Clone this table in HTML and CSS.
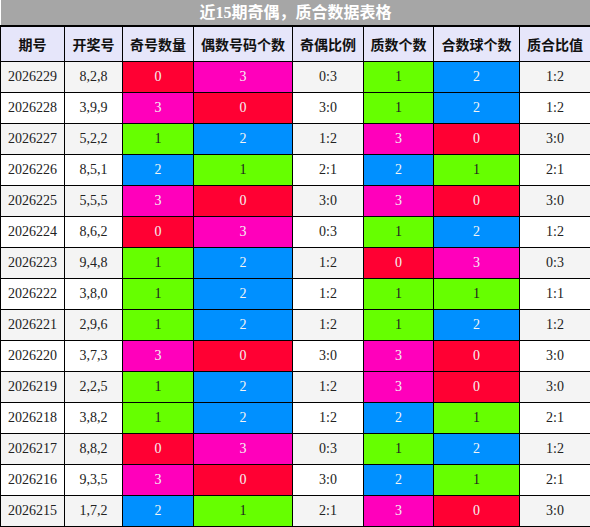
FILE: index.html
```html
<!DOCTYPE html>
<html lang="zh">
<head>
<meta charset="utf-8">
<link rel="stylesheet" href="styles.css">
</head>
<body>
<table class="tbl">
  <colgroup>
    <col class="c1"><col class="c2"><col class="c3"><col class="c4"><col class="c5"><col class="c6"><col class="c7"><col class="c8">
  </colgroup>
  <thead>
    <tr class="title"><th colspan="8">近15期奇偶，质合数据表格</th></tr>
    <tr class="head"><th>期号</th><th>开奖号</th><th>奇号数量</th><th>偶数号码个数</th><th>奇偶比例</th><th>质数个数</th><th>合数球个数</th><th>质合比值</th></tr>
  </thead>
  <tbody>
    <tr><td>2026229</td><td>8,2,8</td><td class="red">0</td><td class="mag">3</td><td>0:3</td><td class="grn">1</td><td class="blu">2</td><td>1:2</td></tr>
    <tr><td>2026228</td><td>3,9,9</td><td class="mag">3</td><td class="red">0</td><td>3:0</td><td class="grn">1</td><td class="blu">2</td><td>1:2</td></tr>
    <tr><td>2026227</td><td>5,2,2</td><td class="grn">1</td><td class="blu">2</td><td>1:2</td><td class="mag">3</td><td class="red">0</td><td>3:0</td></tr>
    <tr><td>2026226</td><td>8,5,1</td><td class="blu">2</td><td class="grn">1</td><td>2:1</td><td class="blu">2</td><td class="grn">1</td><td>2:1</td></tr>
    <tr><td>2026225</td><td>5,5,5</td><td class="mag">3</td><td class="red">0</td><td>3:0</td><td class="mag">3</td><td class="red">0</td><td>3:0</td></tr>
    <tr><td>2026224</td><td>8,6,2</td><td class="red">0</td><td class="mag">3</td><td>0:3</td><td class="grn">1</td><td class="blu">2</td><td>1:2</td></tr>
    <tr><td>2026223</td><td>9,4,8</td><td class="grn">1</td><td class="blu">2</td><td>1:2</td><td class="red">0</td><td class="mag">3</td><td>0:3</td></tr>
    <tr><td>2026222</td><td>3,8,0</td><td class="grn">1</td><td class="blu">2</td><td>1:2</td><td class="grn">1</td><td class="grn">1</td><td>1:1</td></tr>
    <tr><td>2026221</td><td>2,9,6</td><td class="grn">1</td><td class="blu">2</td><td>1:2</td><td class="grn">1</td><td class="blu">2</td><td>1:2</td></tr>
    <tr><td>2026220</td><td>3,7,3</td><td class="mag">3</td><td class="red">0</td><td>3:0</td><td class="mag">3</td><td class="red">0</td><td>3:0</td></tr>
    <tr><td>2026219</td><td>2,2,5</td><td class="grn">1</td><td class="blu">2</td><td>1:2</td><td class="mag">3</td><td class="red">0</td><td>3:0</td></tr>
    <tr><td>2026218</td><td>3,8,2</td><td class="grn">1</td><td class="blu">2</td><td>1:2</td><td class="blu">2</td><td class="grn">1</td><td>2:1</td></tr>
    <tr><td>2026217</td><td>8,8,2</td><td class="red">0</td><td class="mag">3</td><td>0:3</td><td class="grn">1</td><td class="blu">2</td><td>1:2</td></tr>
    <tr><td>2026216</td><td>9,3,5</td><td class="mag">3</td><td class="red">0</td><td>3:0</td><td class="blu">2</td><td class="grn">1</td><td>2:1</td></tr>
    <tr><td>2026215</td><td>1,7,2</td><td class="blu">2</td><td class="grn">1</td><td>2:1</td><td class="mag">3</td><td class="red">0</td><td>3:0</td></tr>
  </tbody>
</table>
</body>
</html>
```
FILE: styles.css
```css
html, body {
  margin: 0;
  padding: 0;
  background: #ffffff;
}
.tbl {
  border-collapse: collapse;
  table-layout: fixed;
  width: 590px;
  font-family: "Liberation Serif", "Noto Sans CJK SC", serif;
  font-size: 14px;
  color: #222;
}
.c1 { width: 64px; }
.c2 { width: 58px; }
.c3 { width: 71px; }
.c4 { width: 99px; }
.c5 { width: 71px; }
.c6 { width: 70px; }
.c7 { width: 86px; }
.c8 { width: 71px; }
.tbl th, .tbl td {
  border: 1px solid #000;
  text-align: center;
  padding: 0;
  overflow: hidden;
  white-space: nowrap;
}
.title th {
  height: 25px;
  background: #a6a6a6;
  color: #fff;
  font-size: 16px;
  font-weight: bold;
  border-width: 0 0 2px 0;
  line-height: 25px;
}
.head th {
  height: 34px;
  background: #e6e6fa;
  font-family: "Noto Sans CJK SC", sans-serif;
  font-weight: bold;
  font-size: 14px;
  color: #111;
}
.tbl td {
  height: 30px;
}
.tbl tbody tr:nth-child(odd) { background: #f4f4f4; }
.tbl tbody tr:nth-child(even) { background: #ffffff; }
.red { background: #ff0033; color: #f4f4f4; }
.mag { background: #ff00bb; color: #f4f4f4; }
.grn { background: #66ff00; color: #222; }
.blu { background: #0090ff; color: #f4f4f4; }
```
